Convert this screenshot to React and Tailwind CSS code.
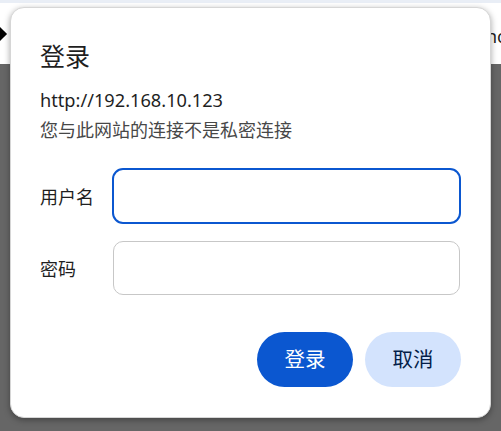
export default function App() {
  const font = { fontFamily: '"Noto Sans", "Noto Sans CJK SC", sans-serif' };
  return (
    <div className="relative w-[501px] h-[431px] overflow-hidden bg-[#666666]" style={font}>
      {/* page behind the dialog */}
      <div className="absolute left-0 top-0 w-full h-[64px] bg-white">
        <div className="h-[3px] bg-[#e9eef6]" />
        <div className="absolute left-[-5px] top-[29px] w-[10px] h-[10px] rotate-45 bg-black" />
        <div className="absolute left-[486px] top-[23px] text-[18px] text-[#1f1f1f]">nc</div>
      </div>

      {/* dialog */}
      <div className="absolute left-[10px] top-[7px] w-[481px] h-[411px] rounded-[14px] bg-white border border-[#d6d6d6] shadow-[0_2px_6px_rgba(0,0,0,0.35)] px-[29px] pt-[31px]">
        <h1 className="text-[25px] leading-[34px] text-[#1f1f1f] font-normal">登录</h1>
        <div className="mt-[12px] text-[18.2px] leading-[30px] text-[#1f1f1f]">http://192.168.10.123</div>
        <div className="text-[18px] leading-[30px] text-[#474747]">您与此网站的连接不是私密连接</div>

        <div className="mt-[23px] flex flex-col gap-[16px]">
          <div className="flex items-center h-[56px]">
            <span className="w-[72px] pt-[3px] text-[18px] text-[#1f1f1f]">用户名</span>
            <div className="w-[349px] h-[56px] rounded-[11px] border-[2.5px] border-[#0b57d0]" />
          </div>
          <div className="flex items-center h-[56px]">
            <span className="w-[72px] pt-[3px] text-[18px] text-[#1f1f1f]">密码</span>
            <div className="ml-[1px] w-[347px] h-[54px] rounded-[10px] border border-[#c7c7c7]" />
          </div>
        </div>

        <div className="mt-[36px] flex justify-end gap-[12px]">
          <button className="w-[96px] h-[55px] rounded-full bg-[#0b57d0] text-white text-[20.5px]">登录</button>
          <button className="w-[96px] h-[55px] rounded-full bg-[#d3e3fd] text-[#041e49] text-[20.5px]">取消</button>
        </div>
      </div>
    </div>
  );
}
